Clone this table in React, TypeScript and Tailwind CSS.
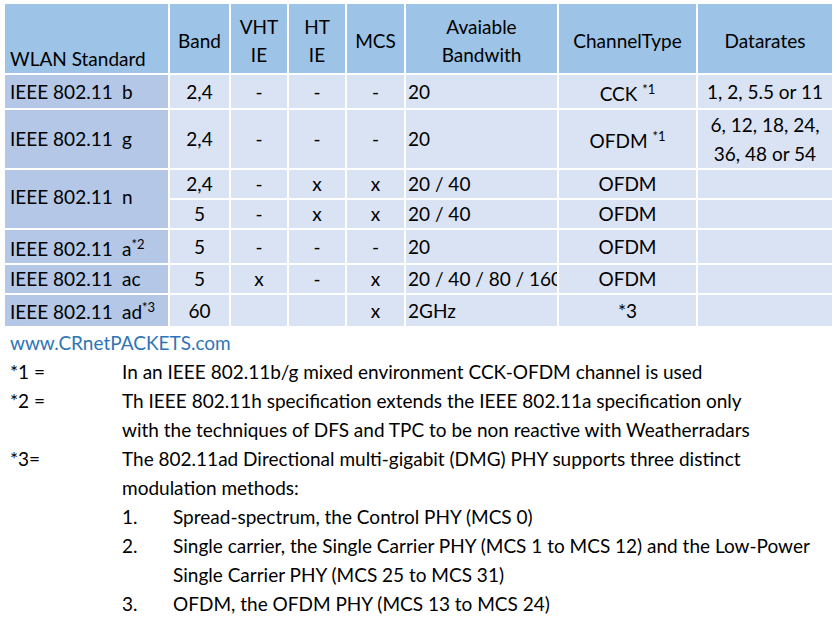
import type { ReactNode } from "react";

const head = "bg-[#9dc3e6] align-middle text-center pt-1 font-normal";
const std = "bg-[#b4c7e7] text-left pl-[5px] align-middle";
const cell = "bg-[#dae3f3] text-center align-middle";

function Sup({ children }: { children: ReactNode }) {
  return (
    <sup className="text-[13px] leading-none relative -top-[7px]">
      {children}
    </sup>
  );
}

function Std({ suffix, sup }: { suffix: string; sup?: string }) {
  return (
    <span className="whitespace-nowrap">
      <span className="inline-block w-[112px]">IEEE 802.11</span>
      {suffix}
      {sup && <Sup>{sup}</Sup>}
    </span>
  );
}

function Bw({ children }: { children: ReactNode }) {
  return (
    <td className="bg-[#dae3f3] text-left pl-[2px] align-middle overflow-hidden whitespace-nowrap">
      {children}
    </td>
  );
}

export default function App() {
  return (
    <div className="w-[837px] h-[620px] bg-white text-black font-['Lato',_'Liberation_Sans',_sans-serif] text-[19px] leading-[29px] overflow-hidden">
      <table className="table-fixed border-separate border-spacing-[2px] ml-[3px] mt-[2px] w-[831px] leading-[24px]">
        <colgroup>
          <col className="w-[163px]" />
          <col className="w-[59px]" />
          <col className="w-[56px]" />
          <col className="w-[56px]" />
          <col className="w-[57px]" />
          <col className="w-[151px]" />
          <col className="w-[137px]" />
          <col className="w-[134px]" />
        </colgroup>
        <thead>
          <tr className="h-[69px]">
            <th className="bg-[#9dc3e6] text-left pl-[5px] align-bottom pb-[2px] font-normal">
              WLAN Standard
            </th>
            <th className={head}>Band</th>
            <th className={`${head} leading-[28px]`}>
              VHT
              <br />
              IE
            </th>
            <th className={`${head} leading-[28px]`}>
              HT
              <br />
              IE
            </th>
            <th className={head}>MCS</th>
            <th className={`${head} leading-[28px]`}>
              Avaiable
              <br />
              Bandwith
            </th>
            <th className={head}>ChannelType</th>
            <th className={head}>Datarates</th>
          </tr>
        </thead>
        <tbody>
          <tr className="h-[33px]">
            <td className={std}>
              <Std suffix="b" />
            </td>
            <td className={cell}>2,4</td>
            <td className={cell}>-</td>
            <td className={cell}>-</td>
            <td className={cell}>-</td>
            <Bw>20</Bw>
            <td className={`${cell} pt-[4px]`}>
              CCK <Sup>*1</Sup>
            </td>
            <td className={cell}>1, 2, 5.5 or 11</td>
          </tr>
          <tr className="h-[57px]">
            <td className={std}>
              <Std suffix="g" />
            </td>
            <td className={cell}>2,4</td>
            <td className={cell}>-</td>
            <td className={cell}>-</td>
            <td className={cell}>-</td>
            <Bw>20</Bw>
            <td className={`${cell} pt-[4px]`}>
              OFDM <Sup>*1</Sup>
            </td>
            <td className={`${cell} leading-[29px]`}>
              6, 12, 18, 24,
              <br />
              36, 48 or 54
            </td>
          </tr>
          <tr className="h-[28px]">
            <td rowSpan={2} className={`${std} pb-[4px]`}>
              <Std suffix="n" />
            </td>
            <td className={cell}>2,4</td>
            <td className={cell}>-</td>
            <td className={cell}>x</td>
            <td className={cell}>x</td>
            <Bw>20 / 40</Bw>
            <td className={cell}>OFDM</td>
            <td className={cell}></td>
          </tr>
          <tr className="h-[28px]">
            <td className={cell}>5</td>
            <td className={cell}>-</td>
            <td className={cell}>x</td>
            <td className={cell}>x</td>
            <Bw>20 / 40</Bw>
            <td className={cell}>OFDM</td>
            <td className={cell}></td>
          </tr>
          <tr className="h-[33px]">
            <td className={`${std} pt-[4px]`}>
              <Std suffix="a" sup="*2" />
            </td>
            <td className={cell}>5</td>
            <td className={cell}>-</td>
            <td className={cell}>-</td>
            <td className={cell}>-</td>
            <Bw>20</Bw>
            <td className={cell}>OFDM</td>
            <td className={cell}></td>
          </tr>
          <tr className="h-[28px]">
            <td className={std}>
              <Std suffix="ac" />
            </td>
            <td className={cell}>5</td>
            <td className={cell}>x</td>
            <td className={cell}>-</td>
            <td className={cell}>x</td>
            <Bw>20 / 40 / 80 / 160</Bw>
            <td className={cell}>OFDM</td>
            <td className={cell}></td>
          </tr>
          <tr className="h-[31px]">
            <td className={`${std} pt-[2px]`}>
              <Std suffix="ad" sup="*3" />
            </td>
            <td className={cell}>60</td>
            <td className={cell}></td>
            <td className={cell}></td>
            <td className={cell}>x</td>
            <Bw>2GHz</Bw>
            <td className={cell}>*3</td>
            <td className={cell}></td>
          </tr>
        </tbody>
      </table>

      {/* Footnotes */}
      <div className="pl-[10px]">
        <div className="text-[#2e75b6]">www.CRnetPACKETS.com</div>
        <div className="flex">
          <div className="w-[112px] shrink-0">*1 =</div>
          <div>In an IEEE 802.11b/g mixed environment CCK-OFDM channel is used</div>
        </div>
        <div className="flex">
          <div className="w-[112px] shrink-0">*2 =</div>
          <div>
            Th IEEE 802.11h specification extends the IEEE 802.11a specification only
            <br />
            with the techniques of DFS and TPC to be non reactive with Weatherradars
          </div>
        </div>
        <div className="flex">
          <div className="w-[112px] shrink-0">*3=</div>
          <div>
            The 802.11ad Directional multi-gigabit (DMG) PHY supports three distinct
            <br />
            modulation methods:
            <div className="flex">
              <div className="w-[51px] shrink-0">1.</div>
              <div>Spread-spectrum, the Control PHY (MCS 0)</div>
            </div>
            <div className="flex">
              <div className="w-[51px] shrink-0">2.</div>
              <div>
                Single carrier, the Single Carrier PHY (MCS 1 to MCS 12) and the Low-Power
                <br />
                Single Carrier PHY (MCS 25 to MCS 31)
              </div>
            </div>
            <div className="flex">
              <div className="w-[51px] shrink-0">3.</div>
              <div>OFDM, the OFDM PHY (MCS 13 to MCS 24)</div>
            </div>
          </div>
        </div>
      </div>
    </div>
  );
}
